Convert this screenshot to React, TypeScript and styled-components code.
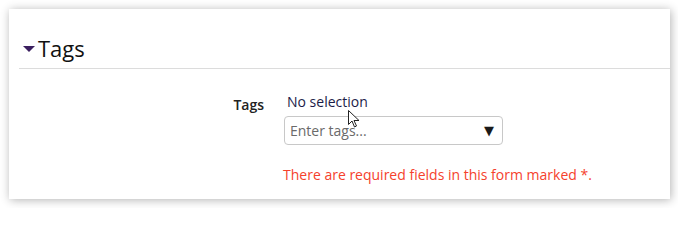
import styled, { createGlobalStyle } from "styled-components";

const Global = createGlobalStyle`
  html, body {
    margin: 0;
    padding: 0;
    background: #ffffff;
    font-family: "Open Sans", "Noto Sans", sans-serif;
  }
`;

const Page = styled.div`
  padding: 9px 8px 9px 9px;
`;

const Card = styled.section`
  position: relative;
  width: 661px;
  height: 190px;
  background: #fff;
  box-shadow: 1px 1px 9px rgba(0, 0, 0, 0.3);
  padding-left: 10px;
  box-sizing: border-box;
`;

const Header = styled.div`
  display: flex;
  align-items: center;
  height: 60px;
  padding: 19px 0 0 4px;
  border-bottom: 1px solid #dcdcdc;
  box-sizing: border-box;
`;

const Caret = styled.span`
  width: 0;
  height: 0;
  border-left: 6px solid transparent;
  border-right: 6px solid transparent;
  border-top: 6px solid #3b1f5f;
  margin-right: 3px;
  margin-top: 2px;
`;

const Title = styled.h2`
  margin: 0;
  font-size: 22px;
  font-weight: 400;
  color: #111;
`;

const Row = styled.div`
  display: grid;
  grid-template-columns: 245px 220px;
  column-gap: 20px;
  margin-top: 23px;
`;

const Label = styled.div`
  text-align: right;
  font-size: 14px;
  font-weight: 600;
  color: #222;
  padding-top: 3px;
`;

const Field = styled.div`
  display: flex;
  flex-direction: column;
  position: relative;
`;

const Value = styled.div`
  font-size: 14px;
  color: #1c1c48;
  padding-left: 3px;
  line-height: 20px;
`;

const Select = styled.div`
  margin-top: 4px;
  height: 29px;
  width: 219px;
  border: 1px solid #c8c8c8;
  border-radius: 4px;
  box-sizing: border-box;
  display: flex;
  align-items: center;
  justify-content: space-between;
  padding: 0 8px 0 5px;
`;

const Placeholder = styled.span`
  font-size: 14px;
  color: #6a6a6a;
`;

const Arrow = styled.span`
  font-size: 13px;
  color: #1a1a1a;
  font-family: "DejaVu Sans", sans-serif;
`;

const Error = styled.p`
  margin: 20px 0 0 264px;
  font-size: 14px;
  color: #f5412c;
`;

const Cursor = styled.svg`
  position: absolute;
  left: 64px;
  top: 18px;
`;

const App = () => {
  return (
    <>
      <Global />
      <Page>
        <Card>
          <Header>
            <Caret />
            <Title>Tags</Title>
          </Header>
          <Row>
            <Label>Tags</Label>
            <Field>
              <Value>No selection</Value>
              <Select>
                <Placeholder>Enter tags...</Placeholder>
                <Arrow>▼</Arrow>
              </Select>
              <Cursor width="13" height="19" viewBox="0 0 13 19">
                <path
                  d="M0.5 0.5 L0.5 14.5 L4 11 L6.5 17 L8.5 16 L6 10.5 L11 10.5 Z"
                  fill="#fff"
                  stroke="#222"
                  strokeWidth="1"
                  strokeLinejoin="round"
                />
              </Cursor>
            </Field>
          </Row>
          <Error>There are required fields in this form marked *.</Error>
        </Card>
      </Page>
    </>
  );
};

export default App;
